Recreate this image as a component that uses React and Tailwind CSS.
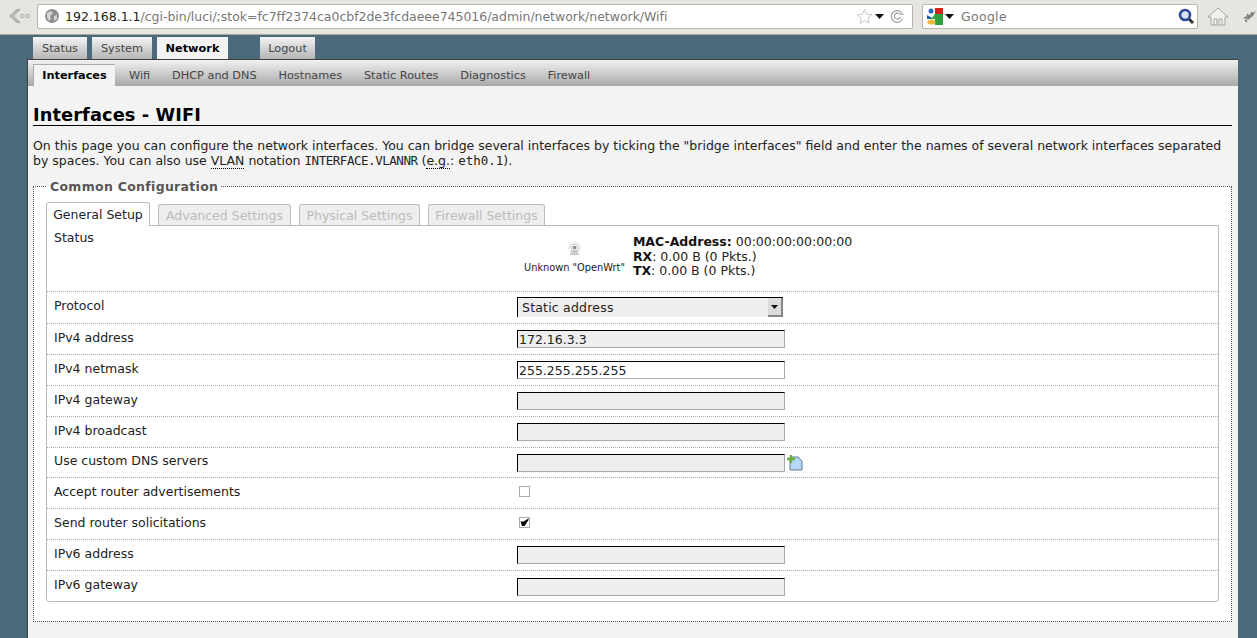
import React from 'react';

const mainTabs = [
  { label: 'Status', w: 'w-[54px]', ml: '' },
  { label: 'System', w: 'w-[60px]', ml: 'ml-[5px]' },
];

const subTabs = ['Wifi', 'DHCP and DNS', 'Hostnames', 'Static Routes', 'Diagnostics', 'Firewall'];

const settingTabs = [
  { label: 'Advanced Settings', w: 'w-[133px]' },
  { label: 'Physical Settings', w: 'w-[121px]' },
  { label: 'Firewall Settings', w: 'w-[117px]' },
];

function TextField({ value = '', white = false }) {
  return (
    <div className={`h-[18px] w-[268px] border-t border-l border-t-black border-l-black border-r border-b border-r-[#aaa] border-b-[#aaa] pl-px text-[12.5px] leading-[17px] text-[#222] ${white ? 'bg-white' : 'bg-[#eeeeee]'}`}>
      {value}
    </div>
  );
}

function Row({ label, children, h = 'h-[31px]', last = false }) {
  return (
    <div className={`flex items-center ${h} ${last ? '' : 'border-b border-dotted border-[#aaa]'}`}>
      <div className="w-[470px] pl-[7px] pb-[4px] text-[#222]">{label}</div>
      {children}
    </div>
  );
}

function Toolbar() {
  return (
    <div className="flex h-[35px] items-center border-b border-[#a9a69f] bg-[#e7e5e0] pb-[2px]">
      <svg width="24" height="20" viewBox="0 0 24 20" className="ml-[7px]" fill="none" stroke="#a8a8a2">
        <path d="M11 3 L3 10 L11 17 M13 3 L6 10 L13 17" strokeWidth="1.3" />
        <circle cx="15.5" cy="10" r="1.8" />
        <circle cx="21" cy="10" r="1.8" />
      </svg>
      <div className="ml-[6px] flex h-[25px] w-[876px] items-center rounded-[2px] border border-[#b9b5aa] bg-white">
        <svg width="16" height="16" viewBox="0 0 16 16" className="ml-[6px]">
          <circle cx="8" cy="8" r="7" fill="#8f8f8f" />
          <path d="M3 5 L7 3 L9 5 L6 8 L7 11 L5 13 L3 9 Z M10 8 L13 7 L13 11 L10 13 Z" fill="#d6d6d6" />
        </svg>
        <div className="ml-[5px] w-[787px] text-[12.5px] tracking-[-0.03px] whitespace-nowrap text-[#777]">
          <span className="tracking-normal text-[#222]">192.168.1.1</span>/cgi-bin/luci/;stok=fc7ff2374ca0cbf2de3fcdaeee745016/admin/network/network/Wifi
        </div>
        <svg width="17" height="17" viewBox="0 0 17 17" className="ml-[4px]" fill="#fff" stroke="#c8c8c8">
          <path d="M8.5 1.5 L10.6 6.3 L15.8 6.8 L11.9 10.2 L13 15.3 L8.5 12.7 L4 15.3 L5.1 10.2 L1.2 6.8 L6.4 6.3 Z" />
        </svg>
        <svg width="9" height="5" viewBox="0 0 9 5" className="ml-[2px]"><path d="M0 0 H9 L4.5 5 Z" fill="#111" /></svg>
        <svg width="15" height="15" viewBox="0 0 16 16" className="ml-[6px]" fill="none" stroke="#a4a4a4" strokeWidth="1.3">
          <path d="M13.5 10.5 A6.3 6.3 0 1 1 13 4.5" />
          <path d="M11 8.5 A3.2 3.2 0 1 1 10.5 5.6 H15" />
        </svg>
      </div>
      <div className="ml-[9px] flex h-[25px] w-[276px] items-center rounded-[2px] border border-[#b9b5aa] bg-white">
        <svg width="16" height="17" viewBox="0 0 16 17" className="ml-[4px]">
          <rect x="0" y="0" width="16" height="17" fill="#2f9e3f" />
          <path d="M8 0 H16 V6 H8 Z" fill="#d9201b" />
          <path d="M0 0 H8 V6 L5 10 L0 8 Z" fill="#fff" />
          <circle cx="4" cy="3" r="2.5" fill="#2a6ac0" />
          <path d="M0 7 L5 10 L0 12 Z" fill="#1d5aa8" />
          <path d="M0 11 H8 L8 17 H0 Z" fill="#fff" />
          <ellipse cx="4.5" cy="14" rx="4" ry="2.6" fill="#efb73e" />
        </svg>
        <svg width="9" height="5" viewBox="0 0 9 5" className="ml-[2px]"><path d="M0 0 H9 L4.5 5 Z" fill="#111" /></svg>
        <div className="ml-[7px] w-[215px] text-[12.5px] tracking-[0.3px] text-[#777]">Google</div>
        <svg width="17" height="17" viewBox="0 0 17 17" className="ml-[2px]" fill="none">
          <path d="M10.5 10.5 L15 15" stroke="#333" strokeWidth="3" />
          <circle cx="7" cy="7" r="5" stroke="#2f4a96" strokeWidth="2.6" fill="#dbe4f5" />
        </svg>
      </div>
      <svg width="22" height="21" viewBox="0 0 22 21" className="ml-[9px]" fill="#f1f0ec" stroke="#a5a49e">
        <path d="M1 11 L11 2 L21 11 L18 11 L18 19 L4 19 L4 11 Z" />
        <path d="M7 19 V13 H10 V19 M12 19 V13 H15 V19" fill="none" />
      </svg>
      <svg width="15" height="14" viewBox="0 0 15 14" className="ml-[13px]">
        <path d="M1 9 L8 5 L14 2 L11 7 L6 11 Z" fill="#8a8a86" />
        <path d="M5 5 L7 8 M9 3 L11 6 M3 11 L5 13" stroke="#6b6b67" strokeWidth="1.2" />
      </svg>
    </div>
  );
}

export default function App() {
  return (
    <div className="h-[638px] w-[1257px] overflow-hidden bg-[#4a6a7c] font-['DejaVu_Sans',sans-serif] text-[12.5px] leading-[15px]">
      <Toolbar />

      {/* main menu */}
      <div className="ml-[33px] flex h-[24px] items-start pt-[2px] text-[11.3px]">
        {mainTabs.map((t) => (
          <div key={t.label} className={`${t.ml} flex h-[22px] ${t.w} items-center justify-center bg-gradient-to-b from-[#f4f4f4] to-[#b5b5b5] text-[#444]`}>
            {t.label}
          </div>
        ))}
        <div className="ml-[5px] flex h-[22px] w-[71px] items-center justify-center bg-[#f3f3f3] font-bold text-black">Network</div>
        <div className="ml-[32px] flex h-[22px] w-[55px] items-center justify-center bg-gradient-to-b from-[#f4f4f4] to-[#b5b5b5] text-[#444]">Logout</div>
      </div>

      <div className="ml-[27px] h-[579px] w-[1211px] border-l border-[#3d3d3d] bg-[#f3f3f3]">
        {/* sub menu */}
        <div className="flex h-[27px] items-end border-t border-[#3d3d3d] bg-gradient-to-b from-[#f2f2f2] to-[#a9a9a9] pl-[5px] text-[11.3px]">
          <div className="flex h-[22px] w-[82px] items-center justify-center border-t border-l border-[#aaa] bg-[#f3f3f3] font-bold text-black">Interfaces</div>
          <div className="flex h-[22px] items-center text-[#444]">
            {subTabs.map((t) => (
              <span key={t} className="ml-[21.8px] first:ml-[14px]">{t}</span>
            ))}
          </div>
        </div>

        <div className="pl-[5px] pr-[6px]">
          <h2 className="mt-[20px] border-b border-black pb-[2px] text-[17.8px] leading-[17px] font-bold tracking-[0.1px] text-black">Interfaces - WIFI</h2>
          <p className="mt-[12px] w-[1199px] text-[12.5px] leading-[15px] text-[#222]">
            On this page you can configure the network interfaces. You can bridge several interfaces by ticking the "bridge interfaces" field and enter the names of several network interfaces separated by spaces. You can also use <span className="border-b border-dotted border-black">VLAN</span> notation <span className="font-['DejaVu_Sans_Mono',monospace] text-[12.5px] tracking-[-0.46px]">INTERFACE.VLANNR</span> (<span className="border-b border-dotted border-black">e.g.</span>: <span className="font-['DejaVu_Sans_Mono',monospace] text-[12.5px]">eth0.1</span>).
          </p>

          <fieldset className="mt-[10px] h-[444px] w-[1199px] border border-dotted border-[#555] bg-white pl-[12px] pr-[11px]">
            <legend className="ml-px px-[3px] text-[12.5px] leading-[17px] font-bold tracking-[0.3px] text-[#555]">Common Configuration</legend>

            <div className="mt-[7px] flex h-[23px] items-end">
              <div className="z-10 -mb-px flex h-[24px] w-[104px] items-center justify-center rounded-t-[3px] border border-b-0 border-[#bbb] bg-white text-[#222]">General Setup</div>
              {settingTabs.map((t) => (
                <div key={t.label} className={`ml-[8px] flex h-[21px] ${t.w} items-center justify-center rounded-t-[3px] border border-b-0 border-[#bbb] bg-[#eeeeee] text-[#bbb]`}>{t.label}</div>
              ))}
            </div>

            <div className="h-[377px] w-[1173px] rounded-b-[3px] border border-[#bbb]">
              <div className="flex h-[66px] border-b border-dotted border-[#aaa]">
                <div className="w-[470px] pl-[7px] pt-[4px] text-[#222]">Status</div>
                <div className="flex flex-col items-center pl-[7px] pt-[15px]">
                  <svg width="15" height="15" viewBox="0 0 16 16" fill="none">
                    <path d="M5 10 L3 15 H13 L11 10 Z" fill="#c4c4c4" />
                    <circle cx="8" cy="7" r="6" stroke="#dcdcdc" />
                    <circle cx="8" cy="7" r="3.8" stroke="#b8b8b8" />
                    <circle cx="8" cy="7" r="2" fill="#8a8a8a" />
                  </svg>
                  <span className="mt-[5px] text-[9.8px] leading-[13px] whitespace-nowrap text-[#222]">Unknown "OpenWrt"</span>
                </div>
                <div className="ml-[8px] pt-[9px] leading-[14.5px] text-[#222]">
                  <div><b className="text-[#111]">MAC-Address:</b> 00:00:00:00:00:00</div>
                  <div><b className="text-[#111]">RX</b>: 0.00 B (0 Pkts.)</div>
                  <div><b className="text-[#111]">TX</b>: 0.00 B (0 Pkts.)</div>
                </div>
              </div>

              <Row label="Protocol" h="h-[32px]">
                <div className="mb-px flex h-[20px] w-[266px] items-center justify-between border-t border-l border-black bg-[#eeeeee] pl-[4px] text-[12.5px] tracking-[0.2px] text-[#222]">
                  Static address
                  <div className="flex h-[19px] w-[15px] items-center justify-center border-r-2 border-b-2 border-[#888] bg-[#dcdcdc]">
                    <svg width="7" height="4" viewBox="0 0 7 4"><path d="M0 0 H7 L3.5 4 Z" fill="#111" /></svg>
                  </div>
                </div>
              </Row>
              <Row label="IPv4 address"><TextField value="172.16.3.3" /></Row>
              <Row label="IPv4 netmask"><TextField value="255.255.255.255" white /></Row>
              <Row label="IPv4 gateway"><TextField /></Row>
              <Row label="IPv4 broadcast"><TextField /></Row>
              <Row label="Use custom DNS servers" h="h-[30px]">
                <TextField />
                <svg width="16" height="16" viewBox="0 0 16 16" className="ml-[2px]">
                  <path d="M3 2 H11 L15 6 V15 H3 Z" fill="#b5d6f7" stroke="#5f7c96" />
                  <path d="M4 0 V8 M0 4 H8" stroke="#6bb03a" strokeWidth="2.4" />
                </svg>
              </Row>
              <Row label="Accept router advertisements">
                <div className="mb-[3px] ml-[2px] h-[11px] w-[11px] border border-[#aaa] bg-white" />
              </Row>
              <Row label="Send router solicitations">
                <div className="mb-[3px] ml-[2px] flex h-[11px] w-[11px] items-center justify-center border border-[#aaa] bg-white">
                  <svg width="9" height="9" viewBox="0 0 9 9"><path d="M0.5 3.5 L3.5 3.5 L8.5 0.5 L8.5 2 L4.5 8 L2 8 Z" fill="#000" /></svg>
                </div>
              </Row>
              <Row label="IPv6 address"><TextField /></Row>
              <Row label="IPv6 gateway" last><TextField /></Row>
            </div>
          </fieldset>
        </div>
      </div>
    </div>
  );
}
